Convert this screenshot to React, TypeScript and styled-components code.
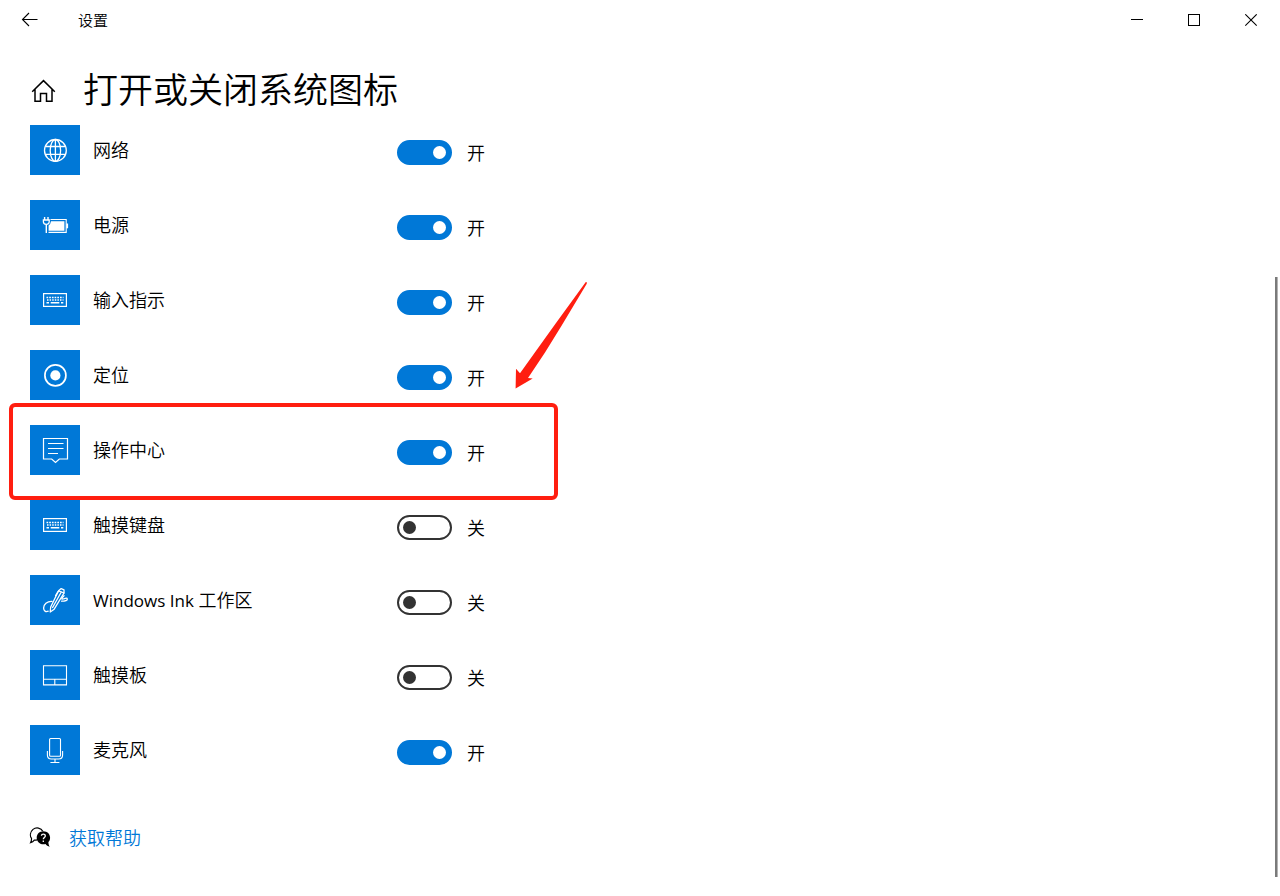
import React, { useState } from "react";
import styled, { createGlobalStyle } from "styled-components";

const GlobalStyle = createGlobalStyle`
  * { box-sizing: border-box; }
  body {
    margin: 0;
    background: #fff;
    color: #000;
    font-family: "Open Sans", "Noto Sans CJK SC", sans-serif;
    font-weight: 350;
  }
`;

const Window = styled.div`
  position: relative;
  display: flex;
  flex-direction: column;
  min-height: 100vh;
  overflow: hidden;
`;

const TitleBar = styled.header`
  display: flex;
  align-items: flex-start;
  justify-content: space-between;
  height: 41px;
`;

const TitleGroup = styled.div`
  display: flex;
  align-items: center;
  height: 39px;
`;

const BarButton = styled.button`
  display: flex;
  align-items: center;
  justify-content: center;
  width: 57px;
  height: 41px;
  padding: 0;
  border: 0;
  background: transparent;
  color: #000;
`;

const BackButton = styled(BarButton)`
  width: 58px;
  height: 39px;
`;

const AppName = styled.span`
  padding-left: 20px;
  font-size: 15px;
  line-height: 20px;
`;

const WindowButtons = styled.div`
  display: flex;
`;

const PageHeader = styled.div`
  display: flex;
  align-items: center;
  gap: 25px;
  padding: 24px 28px 10px;
`;

const HomeButton = styled.button`
  display: flex;
  padding: 4px 2px 2px;
  border: 0;
  background: transparent;
  color: #000;
`;

const PageTitle = styled.h1`
  margin: 0;
  font-size: 35px;
  line-height: 50px;
  font-weight: 350;
`;

const Settings = styled.ul`
  display: flex;
  flex-direction: column;
  gap: 25px;
  margin: 0;
  padding: 0 30px;
  list-style: none;
`;

const SettingRow = styled.li`
  position: relative;
  display: grid;
  grid-template-columns: 50px 291px 1fr;
  column-gap: 13px;
  align-items: center;
  height: 50px;
`;

const Tile = styled.span`
  display: block;
  height: 50px;
  background: #0078d7;
  color: #fff;

  svg { display: block; }
`;

const SettingName = styled.label`
  font-size: 18px;
  line-height: 24px;
`;

const Latin = styled.span`
  font-size: 17px;
  font-weight: 400;
`;

const SwitchGroup = styled.div`
  display: flex;
  align-items: center;
  gap: 15px;
  padding-top: 5px;
`;

const Switch = styled.input`
  appearance: none;
  display: flex;
  align-items: center;
  width: 55px;
  height: 25px;
  margin: 0;
  padding: 0 4px;
  border: 2px solid #333;
  border-radius: 13px;
  background: #fff;

  &::before {
    content: "";
    width: 13px;
    height: 13px;
    border-radius: 50%;
    background: #333;
  }

  &:checked {
    justify-content: flex-end;
    border-color: #0078d7;
    background: #0078d7;
  }

  &:checked::before { background: #fff; }
`;

const SwitchState = styled.span`
  font-size: 18px;
  line-height: 24px;
`;

const Highlight = styled.div`
  position: absolute;
  z-index: 1;
  top: -22px;
  left: -21px;
  width: 549px;
  height: 97px;
  border: 4px solid #ff1e10;
  border-radius: 6px;
  pointer-events: none;
`;

const Arrow = styled.svg`
  position: absolute;
  z-index: 1;
  top: -145px;
  left: 484px;
  pointer-events: none;
`;

const HelpFooter = styled.footer`
  display: flex;
  align-items: center;
  gap: 18px;
  padding: 50px 29px 46px;
`;

const HelpLink = styled.a`
  color: #0078d7;
  font-size: 18px;
  line-height: 26px;
  text-decoration: none;
`;

const ScrollThumb = styled.div`
  position: absolute;
  top: 277px;
  right: 2px;
  bottom: 20px;
  width: 3px;
  border-right: 1px solid #b4b4b4;
  background: #7a7a7a;
`;

const BackIcon = () => (
  <svg width="17" height="15" viewBox="0 0 17 15" fill="none" stroke="currentColor" strokeWidth="1.1">
    <path d="M1.5 7.5H16.5M8 1L1.5 7.5L8 14" />
  </svg>
);

const HomeIcon = () => (
  <svg width="26" height="24" viewBox="0 0 26 24" fill="none" stroke="currentColor" strokeWidth="1.5">
    <path d="M2.2 12.8L13.5 1.6L24.8 12.8M5 10.4V22.2H10.5V14.6H16.5V22.2H22V10.4" />
  </svg>
);

const GlobeIcon = () => (
  <g strokeWidth="1.3">
    <circle cx="25.4" cy="25.4" r="10.9" />
    <ellipse cx="25.4" cy="25.4" rx="5.2" ry="10.9" />
    <path d="M25.4 14.4V36.2M15.2 21.5H35.6M15.2 29.3H35.6" />
  </g>
);

const PowerIcon = () => (
  <g strokeWidth="1.1">
    <path d="M20.5 19.5H36.2V32.4H18.5" />
    <path d="M37.2 23.5V28.3" strokeWidth="1.8" />
    <path d="M21 21.3H34.4V30.7H18.6V25.5Q20.6 24.5 21 21.3Z" fill="currentColor" stroke="none" />
    <path d="M14.6 17V20M18 17V20" strokeWidth="1.4" />
    <path d="M13.4 20H19.2V22Q19 24.3 16.3 24.3Q13.6 24.3 13.4 22Z" strokeWidth="1.3" />
    <path d="M16.3 24.3V33" strokeWidth="1.4" />
  </g>
);

const KeyboardIcon = () => (
  <g strokeWidth="1.2">
    <rect x="13.6" y="18.6" width="22.8" height="12.8" />
    <path d="M16.5 22.5H33.5" strokeWidth="1.3" strokeDasharray="1.7 1" />
    <path d="M17 25H33.5" strokeWidth="1.3" strokeDasharray="1.5 1.1" />
    <path d="M16.5 27.7H19M20.7 27.7H29.3M31 27.7H33.3" strokeWidth="1.4" />
  </g>
);

const LocationIcon = () => (
  <g>
    <circle cx="25.4" cy="25.4" r="10.5" strokeWidth="1.7" />
    <circle cx="25.4" cy="25.4" r="5.1" fill="currentColor" stroke="none" />
  </g>
);

const ActionCenterIcon = () => (
  <g strokeWidth="1.2">
    <path d="M13.5 13.5H37.5V34H29.3L25.5 37.4L21.7 34H13.5Z" />
    <path d="M18 18.5H33.5M18 23.5H33.5M18 28.5H28" />
  </g>
);

const InkIcon = () => (
  <g strokeWidth="1.3" strokeLinejoin="round" strokeLinecap="round">
    <path d="M28.6 15.8L31.2 13.6L34 14.8L34 18L24.2 34.2L20.2 37L20.7 32Z" />
    <path d="M28.6 15.8L34 18M31.3 17L22.6 32.5M25.6 20.6L28 16.6" />
    <path d="M22 26.4C17 26.2 13.6 29.6 13.6 33C13.6 36 15.8 37.2 18.2 36.2" />
    <path d="M34 20.8C31.5 23.2 31 24.6 33 24C35.4 23.3 37.2 22.6 37.3 24.1C37.2 26 34.5 26.2 31.6 26.2" />
  </g>
);

const TouchpadIcon = () => (
  <path strokeWidth="1.1" d="M13.5 15.7H36.5V34.9H13.5ZM13.5 29.2H36.5M24.8 29.2V34.9" />
);

const MicrophoneIcon = () => (
  <g strokeWidth="1.1">
    <rect x="19.6" y="13.5" width="10.9" height="17.8" rx="1" />
    <path d="M17.4 26V30Q17.4 34 21.4 34H28.6Q32.6 34 32.6 30V26M25 34V37.5M20.4 37.5H29.4" />
  </g>
);

const HelpIcon = () => (
  <svg width="22" height="23" viewBox="0 0 22 23" aria-hidden="true">
    <path
      d="M8 12.9C6.8 13.2 6 13.2 5.3 13.1C4.4 14.5 3 15.4 1.6 15.7C2.4 14.4 2.6 12.9 2.5 11.4C0.6 8.6 1.3 4.8 4 2.4C7.2 -0.2 12.1 0.8 13.8 4.2"
      fill="none"
      stroke="#000"
      strokeWidth="1.2"
    />
    <path
      d="M14.4 4.2C18.2 4.2 21.1 7 21.1 10.7C21.1 12.6 20.5 13.9 19.4 15C19.4 16.8 19.8 18.2 20.8 19.8C19 19.5 17.4 18.5 16.5 17.1C11.9 18.2 7.7 15.2 7.7 10.7C7.7 7 10.6 4.2 14.4 4.2Z"
      fill="#000"
    />
    <path
      d="M12.4 8.8C12.5 6.7 16.3 6.6 16.3 8.9C16.3 10.4 14.3 10.4 14.3 12.2M14.3 13.5V15"
      fill="none"
      stroke="#fff"
      strokeWidth="1.3"
    />
  </svg>
);

interface Setting {
  id: string;
  name: React.ReactNode;
  icon: React.ReactNode;
  on: boolean;
  highlighted?: boolean;
}

const SETTINGS: Setting[] = [
  { id: "network", name: "网络", icon: <GlobeIcon />, on: true },
  { id: "power", name: "电源", icon: <PowerIcon />, on: true },
  { id: "input", name: "输入指示", icon: <KeyboardIcon />, on: true },
  { id: "location", name: "定位", icon: <LocationIcon />, on: true },
  { id: "action-center", name: "操作中心", icon: <ActionCenterIcon />, on: true, highlighted: true },
  { id: "touch-keyboard", name: "触摸键盘", icon: <KeyboardIcon />, on: false },
  { id: "ink", name: <><Latin>Windows Ink</Latin> 工作区</>, icon: <InkIcon />, on: false },
  { id: "touchpad", name: "触摸板", icon: <TouchpadIcon />, on: false },
  { id: "microphone", name: "麦克风", icon: <MicrophoneIcon />, on: true },
];

function SettingItem({ id, name, icon, on, highlighted }: Setting) {
  const [checked, setChecked] = useState(on);
  return (
    <SettingRow>
      <Tile>
        <svg width="50" height="50" viewBox="0 0 50 50" fill="none" stroke="currentColor" aria-hidden="true">
          {icon}
        </svg>
      </Tile>
      <SettingName htmlFor={id}>{name}</SettingName>
      <SwitchGroup>
        <Switch
          id={id}
          type="checkbox"
          role="switch"
          checked={checked}
          onChange={(e) => setChecked(e.target.checked)}
        />
        <SwitchState>{checked ? "开" : "关"}</SwitchState>
      </SwitchGroup>
      {highlighted && (
        <>
          <Highlight />
          <Arrow width="76" height="112" viewBox="0 0 76 112" aria-hidden="true">
            <path
              d="M71.8 2L73 2.4L72.6 4L48 45L31 72.5L14 98L18.7 98.6L1.6 108.4L2 88.8L6 93.2L23 69.5L42 43Z"
              fill="#ff1e10"
            />
          </Arrow>
        </>
      )}
    </SettingRow>
  );
}

export default function App() {
  return (
    <Window>
      <GlobalStyle />
      <TitleBar>
        <TitleGroup>
          <BackButton aria-label="返回">
            <BackIcon />
          </BackButton>
          <AppName>设置</AppName>
        </TitleGroup>
        <WindowButtons>
          <BarButton aria-label="最小化">
            <svg width="13" height="13" stroke="currentColor">
              <path d="M0 5.5H12" />
            </svg>
          </BarButton>
          <BarButton aria-label="最大化">
            <svg width="13" height="13" fill="none" stroke="currentColor">
              <rect x="0.5" y="0.5" width="11" height="11" />
            </svg>
          </BarButton>
          <BarButton aria-label="关闭">
            <svg width="13" height="13" stroke="currentColor" strokeWidth="1.1">
              <path d="M0.3 0.3L11.7 11.7M11.7 0.3L0.3 11.7" />
            </svg>
          </BarButton>
        </WindowButtons>
      </TitleBar>
      <PageHeader>
        <HomeButton aria-label="主页">
          <HomeIcon />
        </HomeButton>
        <PageTitle>打开或关闭系统图标</PageTitle>
      </PageHeader>
      <main>
        <Settings>
          {SETTINGS.map((s) => (
            <SettingItem key={s.id} {...s} />
          ))}
        </Settings>
      </main>
      <HelpFooter>
        <HelpIcon />
        <HelpLink href="#help">获取帮助</HelpLink>
      </HelpFooter>
      <ScrollThumb />
    </Window>
  );
}
